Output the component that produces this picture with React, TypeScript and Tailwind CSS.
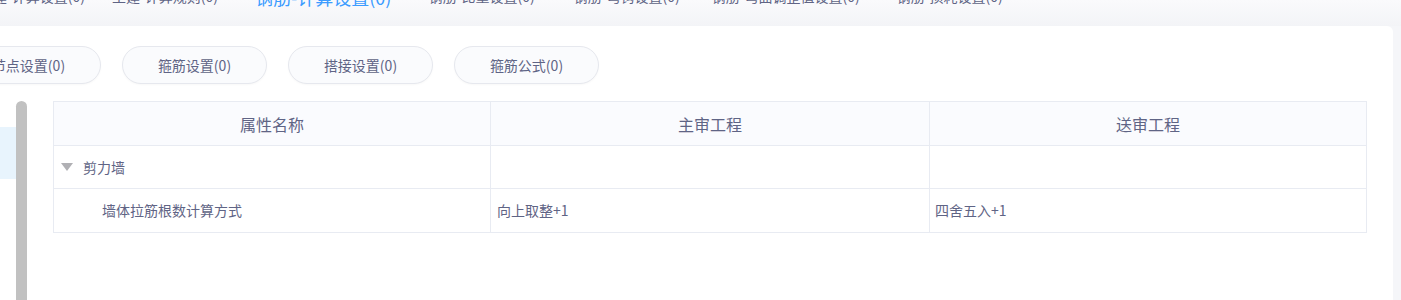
import React from "react";

const font = { fontFamily: '"Noto Sans CJK SC", "Noto Sans", sans-serif' };

const tabs: { label: string; w: string; active?: boolean; mark?: boolean; right?: boolean }[] = [
  { label: "土建-计算设置(0)", w: "w-[112px]", right: true },
  { label: "土建-计算规则(0)", w: "w-[143px]" },
  { label: "钢筋-计算设置(0)", w: "w-[167px]", active: true },
  { label: "钢筋-比重设置(0)", w: "w-[145px]", mark: true },
  { label: "钢筋-弯钩设置(0)", w: "w-[138px]", mark: true },
  { label: "钢筋-弯曲调整值设置(0)", w: "w-[185px]", mark: true },
  { label: "钢筋-损耗设置(0)", w: "w-[160px]", mark: true },
];

const pills = ["节点设置(0)", "箍筋设置(0)", "搭接设置(0)", "箍筋公式(0)"];

export default function App() {
  return (
    <div className="w-[1401px] h-[300px] overflow-hidden bg-[#f5f6f9] text-[#5f6485]" style={font}>
      {/* top tabs */}
      <div className="h-[26px] overflow-hidden bg-gradient-to-b from-[#fafafc] to-[#f3f4f7]">
        <div className="flex items-end -mt-[17px] h-[22px]">
          {tabs.map((t) => (
            <div
              key={t.label}
              className={
                "shrink-0 flex whitespace-nowrap leading-none " +
                t.w +
                (t.right ? " justify-end pr-[27px]" : "") +
                (t.active ? " text-[18px] text-[#3c9cff] translate-y-[1px]" : " text-[14px] text-[#5f6485] -translate-y-[2px]")
              }
            >
              <span className="shrink-0">
                {t.mark && <span className="text-[#e0533f] text-[12px] mr-[1px]">*</span>}
                {t.label}
              </span>
            </div>
          ))}
        </div>
      </div>

      {/* card */}
      <div className="w-[1393px] h-[274px] bg-white rounded-tr-[6px] pt-[20px] pr-[26px]">
        <div className="flex gap-[21px] -ml-[44px]">
          {pills.map((p) => (
            <div
              key={p}
              className="shrink-0 w-[145px] h-[38px] rounded-full border border-[#e6e8ee] bg-[#fafbfd] flex items-center justify-center text-[14px] text-[#5f6485] shadow-[0_1px_2px_rgba(0,0,0,0.03)]"
            >
              {p}
            </div>
          ))}
        </div>

        <div className="flex items-start mt-[17px]">
          {/* left panel */}
          <div className="flex w-[27px] h-[199px] shrink-0">
            <div className="w-[16px] flex flex-col">
              <div className="h-[26px]" />
              <div className="h-[52px] bg-[#e8f4fd]" />
            </div>
            <div className="w-[11px] h-full bg-[#c1c1c1] rounded-t-[6px]" />
          </div>

          {/* table */}
          <div className="ml-[26px] flex-1 border border-[#e8ebf2] text-[14px]">
            <div className="grid grid-cols-[437px_439px_1fr] h-[44px] bg-[#fafbfe] border-b border-[#e8ebf2] text-[16px]">
              <div className="flex items-center justify-center border-r border-[#e8ebf2]">属性名称</div>
              <div className="flex items-center justify-center border-r border-[#e8ebf2]">主审工程</div>
              <div className="flex items-center justify-center">送审工程</div>
            </div>
            <div className="grid grid-cols-[437px_439px_1fr] h-[43px] border-b border-[#e8ebf2]">
              <div className="flex items-center pl-[7px] border-r border-[#e8ebf2]">
                <svg width="12" height="8" viewBox="0 0 12 8" className="mr-[10px]">
                  <path d="M0 0 L12 0 L6 8 Z" fill="#b0b0b4" />
                </svg>
                剪力墙
              </div>
              <div className="border-r border-[#e8ebf2]" />
              <div />
            </div>
            <div className="grid grid-cols-[437px_439px_1fr] h-[43px]">
              <div className="flex items-center pl-[48px] border-r border-[#e8ebf2]">墙体拉筋根数计算方式</div>
              <div className="flex items-center pl-[6px] border-r border-[#e8ebf2]">向上取整+1</div>
              <div className="flex items-center pl-[5px]">四舍五入+1</div>
            </div>
          </div>
        </div>
      </div>
    </div>
  );
}
